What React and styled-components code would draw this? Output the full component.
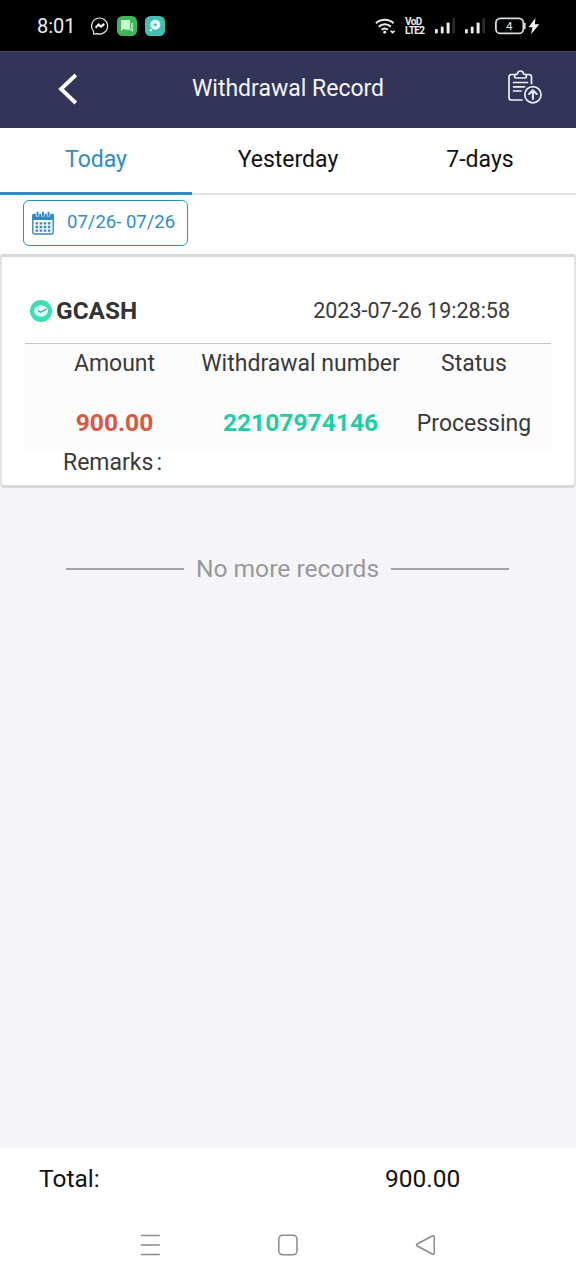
import React from 'react';
import styled, { createGlobalStyle } from 'styled-components';

const colors = {
  header: '#323557',
  active: '#2e8dc4',
  page: '#f4f4f9',
  text: '#3a3a3a',
  red: '#dc5640',
  green: '#1fcfa3',
};

const GlobalStyle = createGlobalStyle`
* {
  box-sizing: border-box;
}
body {
  margin: 0;
  background: ${colors.page};
  font-family: Roboto, "Liberation Sans", sans-serif;
}
svg {
  display: block;
  flex: none;
}
`;

const Screen = styled.div`
display: flex;
flex-direction: column;
width: 576px;
height: 1280px;
overflow: hidden;
background: ${colors.page};
`;

const StatusBar = styled.div`
display: flex;
align-items: center;
justify-content: space-between;
height: 51px;
padding: 0 36px 0 37px;
background: #000;
color: #fff;
`;

const StatusGroup = styled.div`
display: flex;
align-items: center;
gap: ${(props) => props.$gap}px;
`;

const Clock = styled.span`
width: 46px;
font-size: 20px;
line-height: 24px;
color: #eee;
`;

const Volte = styled.span`
width: 20px;
font-size: 10px;
line-height: 9px;
font-weight: 700;
letter-spacing: -0.6px;
white-space: pre;
color: #eee;
`;

const Header = styled.header`
display: grid;
grid-template-columns: 136px 1fr 136px;
align-items: center;
justify-items: center;
height: 77px;
padding-bottom: 3px;
border-top: 1px solid #44475f;
background: ${colors.header};
`;

const Title = styled.h1`
margin: 0;
font-size: 23px;
line-height: 28px;
font-weight: 400;
color: #f4f4fa;
`;

const HeaderAction = styled.div`
justify-self: end;
padding: 0 34px 4px 0;
`;

const Tabs = styled.nav`
display: flex;
height: 67px;
background: #fff;
`;

const Tab = styled.div`
flex: 1;
padding-top: 18px;
border-bottom: ${(props) => (props.$active ? `3px solid ${colors.active}` : '2px solid #e2e2e2')};
font-size: 23px;
line-height: 28px;
text-align: center;
color: ${(props) => (props.$active ? colors.active : '#111')};
`;

const Filter = styled.div`
height: 59px;
padding: 5px 23px 0;
background: #fff;
`;

const DateButton = styled.div`
display: flex;
align-items: center;
gap: 13px;
width: 165px;
height: 46px;
padding: 0 0 1px 8px;
border: 1.5px solid ${colors.active};
border-radius: 6px;
font-size: 18.5px;
white-space: nowrap;
color: ${colors.active};
`;

const DateText = styled.span`
padding-bottom: 1px;
`;

const Card = styled.section`
height: 234px;
padding: 33px 23px 0;
border: 2px solid #e2e2e4;
border-top: 3px solid #d9d9d9;
border-bottom: 3px solid #d9d9dc;
border-radius: 4px;
background: #fff;
color: ${colors.text};
`;

const CardHead = styled.div`
display: flex;
align-items: center;
justify-content: space-between;
height: 54px;
padding: 0 41px 12px 5px;
border-bottom: 1px solid #c4c4c4;
`;

const Bank = styled.div`
display: flex;
align-items: center;
gap: 4px;
font-size: 24.4px;
font-weight: 700;
color: #333;
`;

const Time = styled.span`
font-size: 21.5px;
`;

const Columns = styled.div`
display: grid;
grid-template-columns: 179px 193px 154px;
justify-items: center;
height: 108px;
padding-top: 6px;
background: #fcfcfc;
font-size: 23px;
line-height: 28px;
row-gap: 31px;
align-content: start;
white-space: nowrap;
`;

const Value = styled.span`
padding-top: ${(props) => (props.$color ? 0 : 1)}px;
font-size: ${(props) => (props.$color ? 24.6 : 23)}px;
font-weight: ${(props) => (props.$color ? 700 : 400)};
color: ${(props) => props.$color || colors.text};
`;

const Remarks = styled.div`
display: flex;
gap: 3px;
padding: 1px 38px 0;
font-size: 23px;
line-height: 20px;
`;

const Content = styled.main`
flex: 1;
`;

const EndNote = styled.div`
display: flex;
align-items: center;
justify-content: space-between;
height: 30px;
margin: 66px 67px 0 66px;
font-size: 24.6px;
color: #999;
`;

const EndText = styled.span`
padding-bottom: 2px;
`;

const Rule = styled.span`
width: 118px;
height: 2px;
background: #a2a2a5;
`;

const Total = styled.footer`
display: grid;
grid-template-columns: 346px 1fr;
height: 63px;
padding: 16px 39px 0;
background: #fff;
font-size: 24.5px;
line-height: 30px;
color: #111;
`;

const NavBar = styled.div`
display: flex;
justify-content: space-between;
align-items: center;
height: 69px;
padding: 0 139px 1px;
background: #fff;
`;

const MessengerIcon = () => (
  <svg width="18" height="18" viewBox="0 0 18 18" fill="none" stroke="#eee">
    <path d="M2.5 14.2A8 8 0 1 1 6 16.6L2.7 17z" strokeWidth="1.2" />
    <path d="M4.6 10.7 7.6 7.6 10 9.5 13.3 7" strokeWidth="2.2" />
  </svg>
);

const ChatIcon = () => (
  <svg width="20" height="20" viewBox="0 0 20 20">
    <rect width="20" height="20" rx="5.5" fill="#3fb75a" />
    <path d="M4 4h9v9H6.5L4 15z" fill="#c9f8cc" />
    <path d="M14 7h2v9.5L13.5 14H8v-1h6z" fill="#a5e9ae" />
  </svg>
);

const BubbleIcon = () => (
  <svg width="20" height="20" viewBox="0 0 20 20">
    <rect width="20" height="20" rx="5.5" fill="#43bfb0" />
    <circle cx="10.3" cy="8.8" r="5" fill="#e8fffb" />
    <circle cx="10.3" cy="8.8" r="1.5" fill="#43bfb0" />
    <circle cx="5.8" cy="14.2" r="1.2" fill="#e8fffb" />
  </svg>
);

const WifiIcon = () => (
  <svg width="20" height="18" viewBox="0 0 21 18" fill="none" stroke="#eee" strokeWidth="2.1">
    <path d="M1 6.2a13.5 13.5 0 0 1 18.5 0M4 9.7a9 9 0 0 1 12.6 0M7 13a5 5 0 0 1 6.5 0" />
    <circle cx="10.2" cy="15.6" r="1.5" fill="#eee" stroke="none" />
    <path d="m16.3 14 2.2 2 2.2-2" strokeWidth="1.6" />
  </svg>
);

const SignalIcon = () => (
  <svg width="20" height="17" viewBox="0 0 20 17" fill="#eee">
    <rect y="12" width="2.8" height="4.5" rx="1" />
    <rect x="5.8" y="9.5" width="2.8" height="7" rx="1" />
    <rect x="11.6" y="5.5" width="3" height="11" rx="1" />
    <rect x="17.4" y="1" width="2.6" height="15.5" rx="1" fill="#2c2c2c" />
  </svg>
);

const BatteryText = styled.text`
font-size: 11.5px;
fill: #eee;
`;

const BatteryIcon = () => (
  <svg width="45" height="18" viewBox="0 0 45 18">
    <rect x="0.9" y="1.4" width="27.5" height="15" rx="4.5" fill="none" stroke="#ddd" strokeWidth="1.8" />
    <path d="M29.8 6v6" stroke="#ddd" strokeWidth="1.6" />
    <BatteryText x="11" y="13">4</BatteryText>
    <path d="M40.5 1 33.5 10.2h4l-1.5 7L44.3 7.2h-4.5z" fill="#f4f4f4" />
  </svg>
);

const BackIcon = () => (
  <svg width="20" height="32" viewBox="0 0 20 32" fill="none" stroke="#fff" strokeWidth="3.8">
    <path d="M17.8 2 3 16l14.8 14" />
  </svg>
);

const RecordIcon = () => (
  <svg width="34" height="34" viewBox="0 0 34 34" fill="none" stroke="#eeeefa" strokeWidth="1.7" strokeLinecap="round" strokeLinejoin="round">
    <path d="M6.5 4.5H3.5Q1 4.5 1 7v20.5Q1 30 3.5 30H14M18.5 4.5h2.5q2.5 0 2.5 2.5v6.5" />
    <path d="M6.5 6.5q0-2.5 3-2.5a3 3 0 0 1 6 0q3 0 3 2.5 0 1.5-1.5 1.5H8q-1.5 0-1.5-1.5z" />
    <path d="M5.5 12.5h14M5.5 16.8h11M5.5 21h7.5" />
    <circle cx="24.9" cy="24.7" r="8.1" />
    <path d="M24.9 29v-8.5M21.1 24l3.8-3.7 3.8 3.7" strokeWidth="2" />
  </svg>
);

const CalendarIcon = () => (
  <svg width="22" height="24" viewBox="0 0 22 24">
    <rect x="0.8" y="3.5" width="20.4" height="19.5" rx="1.5" fill="#fff" stroke={colors.active} strokeWidth="1.4" />
    <path d="M0.5 3h21v6h-21z" fill={colors.active} />
    <path d="M5.5 1v4.5M11 1v4.5M16.5 1v4.5" stroke="#fff" strokeWidth="3.4" />
    <path d="M5.5 0.8v4.4M11 0.8v4.4M16.5 0.8v4.4" stroke={colors.active} strokeWidth="1.9" />
    <path d="M3.5 12.3h15M3.5 16h15M3.5 19.7h15" stroke={colors.active} strokeWidth="2.3" strokeDasharray="2.6 1.5" />
  </svg>
);

const GcashIcon = () => (
  <svg width="22" height="22" viewBox="0 0 22 22">
    <circle cx="11" cy="11" r="11" fill="#39dfb4" />
    <ellipse cx="11" cy="11" rx="7" ry="5.8" fill="#dcfff7" />
    <path d="m8 10.5 2.5 1.8 6-3.3" fill="none" stroke="#3aa58d" strokeWidth="1.2" />
  </svg>
);

const MenuIcon = () => (
  <svg width="22" height="22" viewBox="0 0 22 22" stroke="#8a8a8a" strokeWidth="1.5">
    <path d="M1.8 1.5h19M1.8 11h19M1.8 20.5h19" />
  </svg>
);

const HomeIcon = () => (
  <svg width="22" height="22" viewBox="0 0 22 22" fill="none" stroke="#8a8a8a" strokeWidth="1.5">
    <rect x="1.8" y="1.2" width="18.2" height="19.6" rx="4" />
  </svg>
);

const NavBackIcon = () => (
  <svg width="22" height="22" viewBox="0 0 22 22" fill="none" stroke="#8a8a8a" strokeWidth="1.5" strokeLinejoin="round">
    <path d="M17.2 2Q19.2 1 19.2 3.2v15.6q0 2.2-2 1.2L2.3 12q-1.7-1 0-2z" />
  </svg>
);

const App = () => (
  <Screen>
    <GlobalStyle />
    <StatusBar>
      <StatusGroup $gap={8}>
        <Clock>8:01</Clock>
        <MessengerIcon />
        <ChatIcon />
        <BubbleIcon />
      </StatusGroup>
      <StatusGroup $gap={10}>
        <WifiIcon />
        <Volte>{'VoD\nLTE2'}</Volte>
        <SignalIcon />
        <SignalIcon />
        <BatteryIcon />
      </StatusGroup>
    </StatusBar>
    <Header>
      <BackIcon />
      <Title>Withdrawal Record</Title>
      <HeaderAction>
        <RecordIcon />
      </HeaderAction>
    </Header>
    <Tabs>
      <Tab $active>Today</Tab>
      <Tab>Yesterday</Tab>
      <Tab>7-days</Tab>
    </Tabs>
    <Filter>
      <DateButton>
        <CalendarIcon />
        <DateText>07/26- 07/26</DateText>
      </DateButton>
    </Filter>
    <Content>
      <Card>
        <CardHead>
          <Bank>
            <GcashIcon />
            GCASH
          </Bank>
          <Time>2023-07-26 19:28:58</Time>
        </CardHead>
        <Columns>
          <span>Amount</span>
          <span>Withdrawal number</span>
          <span>Status</span>
          <Value $color={colors.red}>900.00</Value>
          <Value $color={colors.green}>22107974146</Value>
          <Value>Processing</Value>
        </Columns>
        <Remarks>
          <span>Remarks</span>
          <span>:</span>
        </Remarks>
      </Card>
      <EndNote>
        <Rule />
        <EndText>No more records</EndText>
        <Rule />
      </EndNote>
    </Content>
    <Total>
      <span>Total:</span>
      <span>900.00</span>
    </Total>
    <NavBar>
      <MenuIcon />
      <HomeIcon />
      <NavBackIcon />
    </NavBar>
  </Screen>
);

export default App;
